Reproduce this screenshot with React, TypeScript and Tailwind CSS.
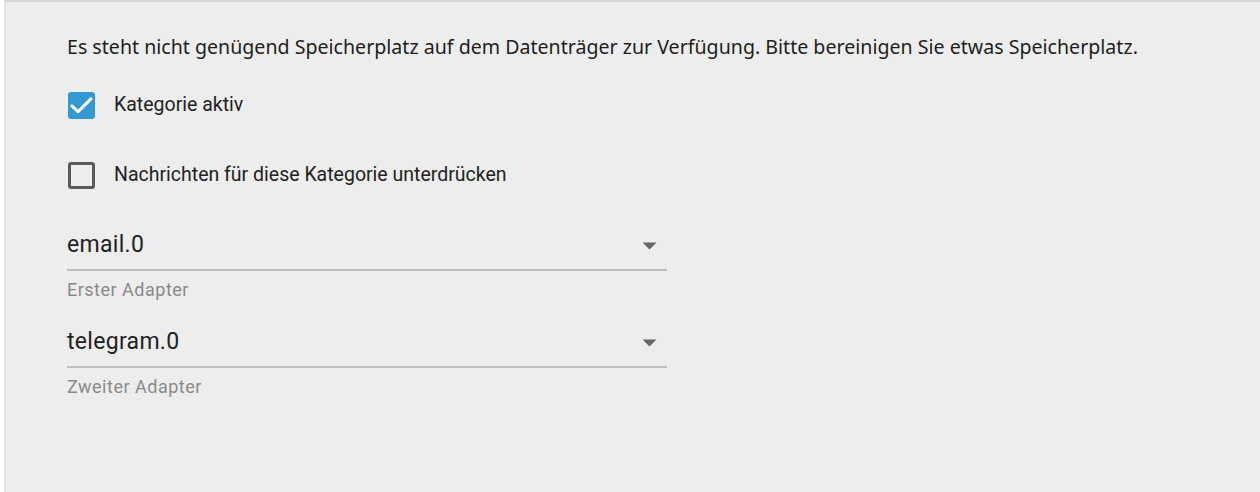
import React from "react";

function Checkbox({ checked }: { checked: boolean }) {
  if (checked) {
    return (
      <div className="w-[27px] h-[27px] shrink-0 rounded-[3px] bg-[#3399d3]">
        <svg width="27" height="27" viewBox="3 3 18 18" fill="none">
          <path d="M5.6 12.2l4.1 3.9 8.6-8.5" stroke="#fff" strokeWidth="2" strokeLinecap="round" strokeLinejoin="round" />
        </svg>
      </div>
    );
  }
  return <div className="w-[27px] h-[27px] shrink-0 rounded-[3px] border-[3px] border-[#5a5a5a]" />;
}

function Select({ value, helper }: { value: string; helper: string }) {
  return (
    <div className="w-[600px]">
      <div className="flex items-center justify-between pb-[8px] border-b-2 border-[#bdbdbd]">
        <span
          className="text-[23px] leading-[32px] tracking-[0.3px] text-[#222]"
          style={{ fontFamily: "Roboto, sans-serif" }}
        >
          {value}
        </span>
        <svg width="15" height="8" viewBox="0 0 15 8" className="mr-[10px] mt-[2px]">
          <path d="M0.5 0.5h14L7.5 7.5z" fill="#666" />
        </svg>
      </div>
      <div
        className="mt-[9px] text-[18px] leading-[20px] text-[#8a8a8a] tracking-[0.5px]"
        style={{ fontFamily: "Roboto, sans-serif" }}
      >
        {helper}
      </div>
    </div>
  );
}

export default function App() {
  return (
    <div className="w-[1260px] h-[492px] bg-white pl-[4px] overflow-hidden">
      <div className="h-full bg-[#ededed] border-l-2 border-[#e2e2e2] border-t-2 border-t-[#d6d6d6] pl-[61px] pt-[31px]">
        <p
          className="text-[19.6px] leading-[28px] text-[#1e1e1e]"
          style={{ fontFamily: "'Noto Sans', 'Open Sans', sans-serif" }}
        >
          Es steht nicht genügend Speicherplatz auf dem Datenträger zur Verfügung. Bitte bereinigen Sie etwas Speicherplatz.
        </p>
        <div className="flex items-start gap-[19px] mt-[31px] ml-[1px]">
          <Checkbox checked />
          <span className="mt-[3px] text-[19.5px] leading-[20px] text-[#222]" style={{ fontFamily: "Roboto, sans-serif" }}>
            Kategorie aktiv
          </span>
        </div>
        <div className="flex items-start gap-[19px] mt-[43px] ml-[1px]">
          <Checkbox checked={false} />
          <span className="mt-[3px] text-[19.5px] leading-[20px] text-[#222]" style={{ fontFamily: "Roboto, sans-serif" }}>
            Nachrichten für diese Kategorie unterdrücken
          </span>
        </div>
        <div className="mt-[40px]">
          <Select value="email.0" helper="Erster Adapter" />
        </div>
        <div className="mt-[26px]">
          <Select value="telegram.0" helper="Zweiter Adapter" />
        </div>
      </div>
    </div>
  );
}
